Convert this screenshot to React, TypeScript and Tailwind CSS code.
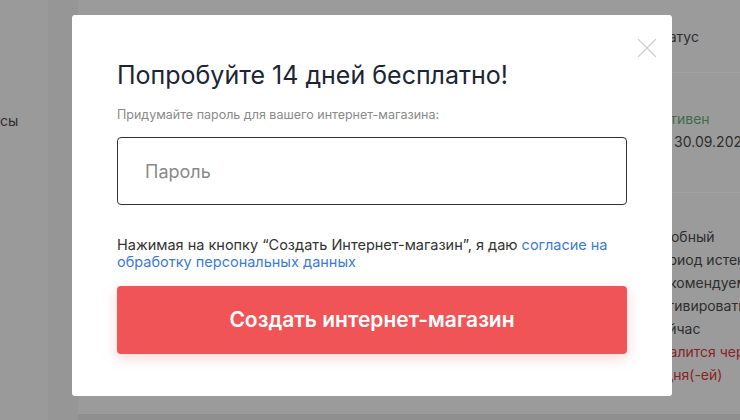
import React from 'react';

const App = () => {
  return (
    <div className="relative w-[740px] h-[420px] overflow-hidden bg-[#999999] font-['Inter',_'Open_Sans',_sans-serif]">
      {/* dimmed page behind the dialog */}
      <div className="flex h-full">
        <div className="w-[48px] bg-[#9a9a9a] pt-[108px]">
          <span className="text-[14px] text-[#2e2e2e]">сы</span>
        </div>
        <div className="w-[30px] bg-[#969696]" />
        <div className="flex-1 flex flex-col">
          <div className="flex-1 bg-[#9b9b9b] flex justify-end">
            <div className="w-[90px] flex flex-col text-[14px] text-[#2e2e2e] whitespace-nowrap">
              <div className="h-[73px] pt-[26px] pl-[2px] border-b border-[#a1a1a1]">Статус</div>
              <div className="h-[120px] pt-[34px] pl-[3px] leading-[23px] border-b border-[#a1a1a1]">
                <div className="text-[#3f6b4b]">Активен</div>
                <div>до 30.09.2027</div>
              </div>
              <div className="pt-[32px] pl-[2px] leading-[23px]">
                <div>Пробный</div>
                <div>период истек.</div>
                <div>Рекомендуем</div>
                <div>активировать</div>
                <div>сейчас</div>
                <div className="text-[#8a2424]">Удалится через</div>
                <div className="text-[#8a2424]">5 дня(-ей)</div>
              </div>
            </div>
          </div>
          <div className="h-[6px] bg-[#8f8f8f]" />
        </div>
      </div>

      {/* dialog */}
      <div className="absolute left-[72px] top-[15px] w-[600px] h-[381px] bg-white rounded-[3px] px-[45px] pt-[44px]">
        <button className="absolute right-[15px] top-[23px] w-[20px] h-[20px]">
          <svg viewBox="0 0 20 20" className="w-[20px] h-[20px]">
            <path d="M1 1 L19 19 M19 1 L1 19" stroke="#cfcfcf" strokeWidth="1.2" />
          </svg>
        </button>
        <h2 className="text-[25px] leading-[32px] text-[#1c2533] font-normal">Попробуйте 14 дней бесплатно!</h2>
        <p className="mt-[16px] text-[12.5px] leading-[16px] text-[#8a8a8a]">Придумайте пароль для вашего интернет-магазина:</p>
        <div className="mt-[14px] h-[68px] border border-[#333333] rounded-[4px] flex items-center px-[27px]">
          <span className="text-[18px] text-[#8a8a8a]">Пароль</span>
        </div>
        <p className="mt-[31px] text-[14.5px] leading-[17px] text-[#333333]">
          Нажимая на кнопку “Создать Интернет-магазин”, я даю{' '}
          <a className="text-[#3f7bd1]">согласие на обработку персональных данных</a>
        </p>
        <button className="mt-[16px] w-full h-[68px] rounded-[4px] bg-[#f05456] shadow-[0_4px_14px_rgba(240,84,86,0.25)] text-white text-[21px] font-semibold">
          Создать интернет-магазин
        </button>
      </div>
    </div>
  );
};

export default App;
